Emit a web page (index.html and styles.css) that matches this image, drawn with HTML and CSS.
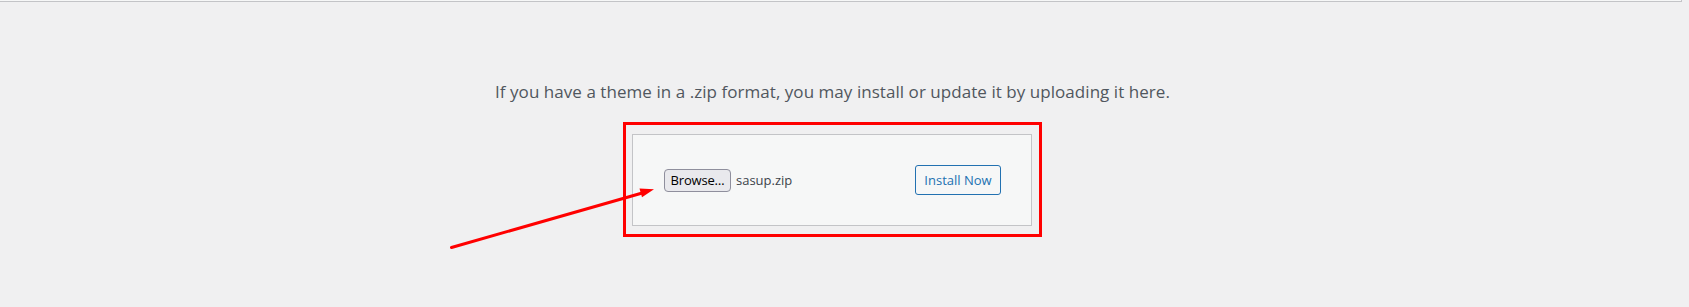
FILE: index.html
```html
<!DOCTYPE html>
<html lang="en">
<head>
    <meta charset="UTF-8">
    <title>Upload Theme</title>
    <link rel="stylesheet" href="styles.css">
</head>
<body>
    <div class="top-strip"></div>

    <div class="upload-theme">
        <p class="install-help">If you have a theme in a .zip format, you may install or update it by uploading it here.</p>

        <!-- rode markering rond het formulier -->
        <div class="highlight">
            <form class="wp-upload-form">
                <div class="file-field">
                    <span class="browse-btn">Browse…</span>
                    <span class="file-name">sasup.zip</span>
                </div>
                <button type="button" class="btn-install">Install Now</button>
            </form>
        </div>
    </div>

    <!-- pijl naar de Browse knop -->
    <svg class="arrow" width="1689" height="307" viewBox="0 0 1689 307">
        <line x1="451.5" y1="247.5" x2="644" y2="192.5" stroke="#ff0000" stroke-width="3" stroke-linecap="round"/>
        <polygon points="654,189.2 639.5,188.6 642,197.2" fill="#ff0000"/>
    </svg>
</body>
</html>
```

FILE: styles.css
```css
body {
    margin: 0;
    background: #f0f0f1;
    font-family: "Open Sans", "Noto Sans", Arial, sans-serif;
    position: relative;
    height: 307px;
    overflow: hidden;
}

.top-strip {
    width: 1681px;
    height: 1px;
    background: #f6f7f7;
    border-bottom: 1px solid #c3c4c7;
    border-right: 1px solid #c3c4c7;
}

.upload-theme {
    padding-right: 24px;
    display: flex;
    flex-direction: column;
    align-items: center;
}

.install-help {
    margin: 0;
    padding-top: 77px;
    color: #50575e;
    font-size: 17px;
    line-height: 26px;
    letter-spacing: 0.05px;
    text-align: center;
}

.highlight {
    margin-top: 17px;
    border: 3px solid #ff0000;
    padding: 9px 7px 8px 6px;
}

.wp-upload-form {
    box-sizing: border-box;
    width: 400px;
    margin: 0;
    padding: 30px;
    display: flex;
    justify-content: space-between;
    align-items: center;
    background: #f6f7f7;
    border: 1px solid #c3c4c7;
}

.file-field {
    display: flex;
    align-items: center;
    gap: 5px;
    margin-left: 1px;
}

.browse-btn {
    box-sizing: border-box;
    width: 67px;
    height: 23px;
    line-height: 21px;
    text-align: center;
    background: #e9e9ed;
    border: 1px solid #8f8f9d;
    border-radius: 4px;
    color: #000;
    font-size: 13px;
    letter-spacing: -0.2px;
}

.file-name {
    color: #3c434a;
    font-size: 13px;
}

.btn-install {
    box-sizing: border-box;
    width: 86px;
    height: 30px;
    padding: 0;
    background: #f6f7f7;
    border: 1px solid #2271b1;
    border-radius: 3px;
    color: #2271b1;
    font-family: inherit;
    font-size: 13px;
    cursor: pointer;
}

.arrow {
    position: absolute;
    left: 0;
    top: 0;
    pointer-events: none;
}
```
